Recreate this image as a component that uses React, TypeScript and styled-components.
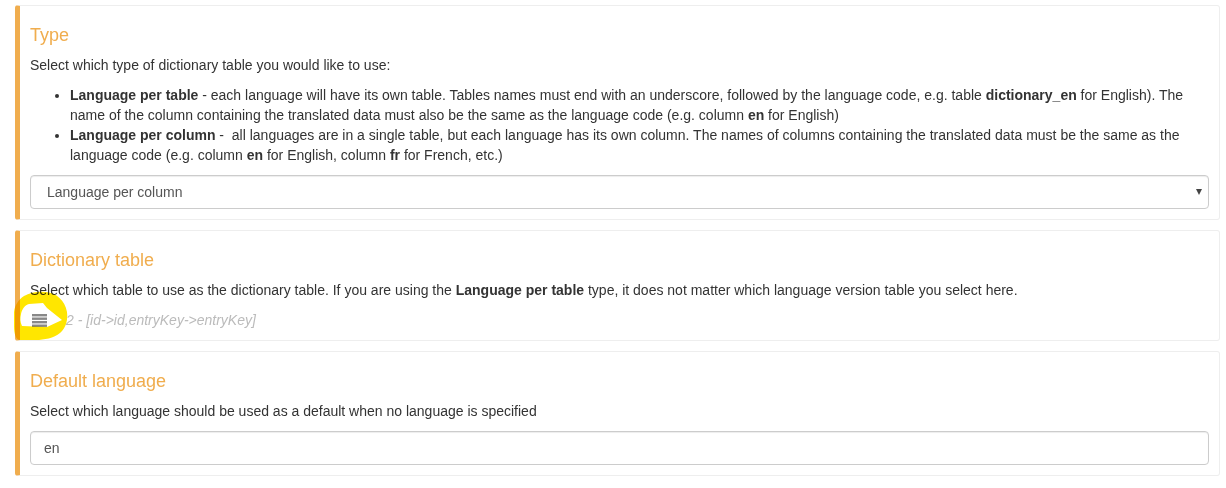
import React from "react";
import styled, { createGlobalStyle } from "styled-components";

const Global = createGlobalStyle`
  html, body { margin: 0; padding: 0; background: #fff; }
  body { font-family: "Liberation Sans", Arial, sans-serif; font-size: 14px; line-height: 20px; color: #333; }
`;

const Page = styled.div`
  position: relative;
  display: flex;
  flex-direction: column;
  gap: 10px;
  padding: 5px 6px 0 15px;
  width: 1226px;
  height: 488px;
  box-sizing: border-box;
  overflow: hidden;
`;

const Callout = styled.section`
  border: 1px solid #eee;
  border-left: 5px solid #f0ad4e;
  border-radius: 3px;
  padding: 19px 10px 10px 10px;
  box-sizing: border-box;
  height: ${(p: { $h: number }) => p.$h}px;
`;

const Title = styled.h4`
  margin: 0 0 10px;
  font-size: 18px;
  font-weight: 500;
  line-height: 20px;
  color: #f0ad4e;
`;

const Text = styled.p`
  margin: 0 0 10px;
`;

const List = styled.ul`
  margin: 0 0 10px;
  padding-left: 40px;
`;

const Control = styled.div`
  display: flex;
  align-items: center;
  justify-content: space-between;
  height: 34px;
  box-sizing: border-box;
  padding: 0 6px 0 ${(p: { $pad: number }) => p.$pad}px;
  border: 1px solid #ccc;
  border-radius: 4px;
  background: #fff;
  color: #555;
  box-shadow: inset 0 1px 1px rgba(0, 0, 0, 0.075);
`;

const Arrow = styled.span`
  width: 0;
  height: 0;
  border-left: 3px solid transparent;
  border-right: 3px solid transparent;
  border-top: 6px solid #444;
`;

const PickerRow = styled.div`
  display: flex;
  align-items: center;
  gap: 19px;
  height: 20px;
  padding-left: 2px;
`;

const Placeholder = styled.span`
  font-style: italic;
  color: #bbb;
`;

const Highlight = styled.svg`
  position: absolute;
  left: 10px;
  top: 286px;
  mix-blend-mode: multiply;
  pointer-events: none;
`;

export default function App() {
  return (
    <Page>
      <Global />
      <Callout $h={215}>
        <Title>Type</Title>
        <Text>Select which type of dictionary table you would like to use:</Text>
        <List>
          <li>
            <b>Language per table</b> - each language will have its own table. Tables names must end with an underscore, followed by the language code, e.g. table <b>dictionary_en</b> for English). The name of the column containing the translated data must also be the same as the language code (e.g. column <b>en</b> for English)
          </li>
          <li>
            <b>Language per column</b> -&nbsp; all languages are in a single table, but each language has its own column. The names of columns containing the translated data must be the same as the language code (e.g. column <b>en</b> for English, column <b>fr</b> for French, etc.)
          </li>
        </List>
        <Control $pad={16}>
          <span>Language per column</span>
          <Arrow />
        </Control>
      </Callout>
      <Callout $h={111}>
        <Title>Dictionary table</Title>
        <Text>
          Select which table to use as the dictionary table. If you are using the <b>Language per table</b> type, it does not matter which language version table you select here.
        </Text>
        <PickerRow>
          <svg width="15" height="13" viewBox="0 0 15 13" fill="#888">
            <rect y="0" width="15" height="2.4" />
            <rect y="3.5" width="15" height="2.4" />
            <rect y="7" width="15" height="2.4" />
            <rect y="10.5" width="15" height="2.4" />
          </svg>
          <Placeholder>2 - [id-&gt;id,entryKey-&gt;entryKey]</Placeholder>
        </PickerRow>
      </Callout>
      <Callout $h={125}>
        <Title>Default language</Title>
        <Text>Select which language should be used as a default when no language is specified</Text>
        <Control $pad={13}>
          <span>en</span>
        </Control>
      </Callout>
      <Highlight width="64" height="58" viewBox="0 0 64 58">
        <path
          fillRule="evenodd"
          fill="#ffe600"
          d="M14 10 C20 6 30 5 36 6 C46 7 55 14 57 26 C58 34 56 42 50 47 C44 52 34 54 26 54 L10 54 C6 54 4 48 4 40 L4 26 C5 19 8 14 14 10 Z M11 28 C12 23 15 19 19 18 L33 17 L37 22 L52 34 L37 41 L12 40 C10 36 10 32 11 28 Z"
        />
      </Highlight>
    </Page>
  );
}
